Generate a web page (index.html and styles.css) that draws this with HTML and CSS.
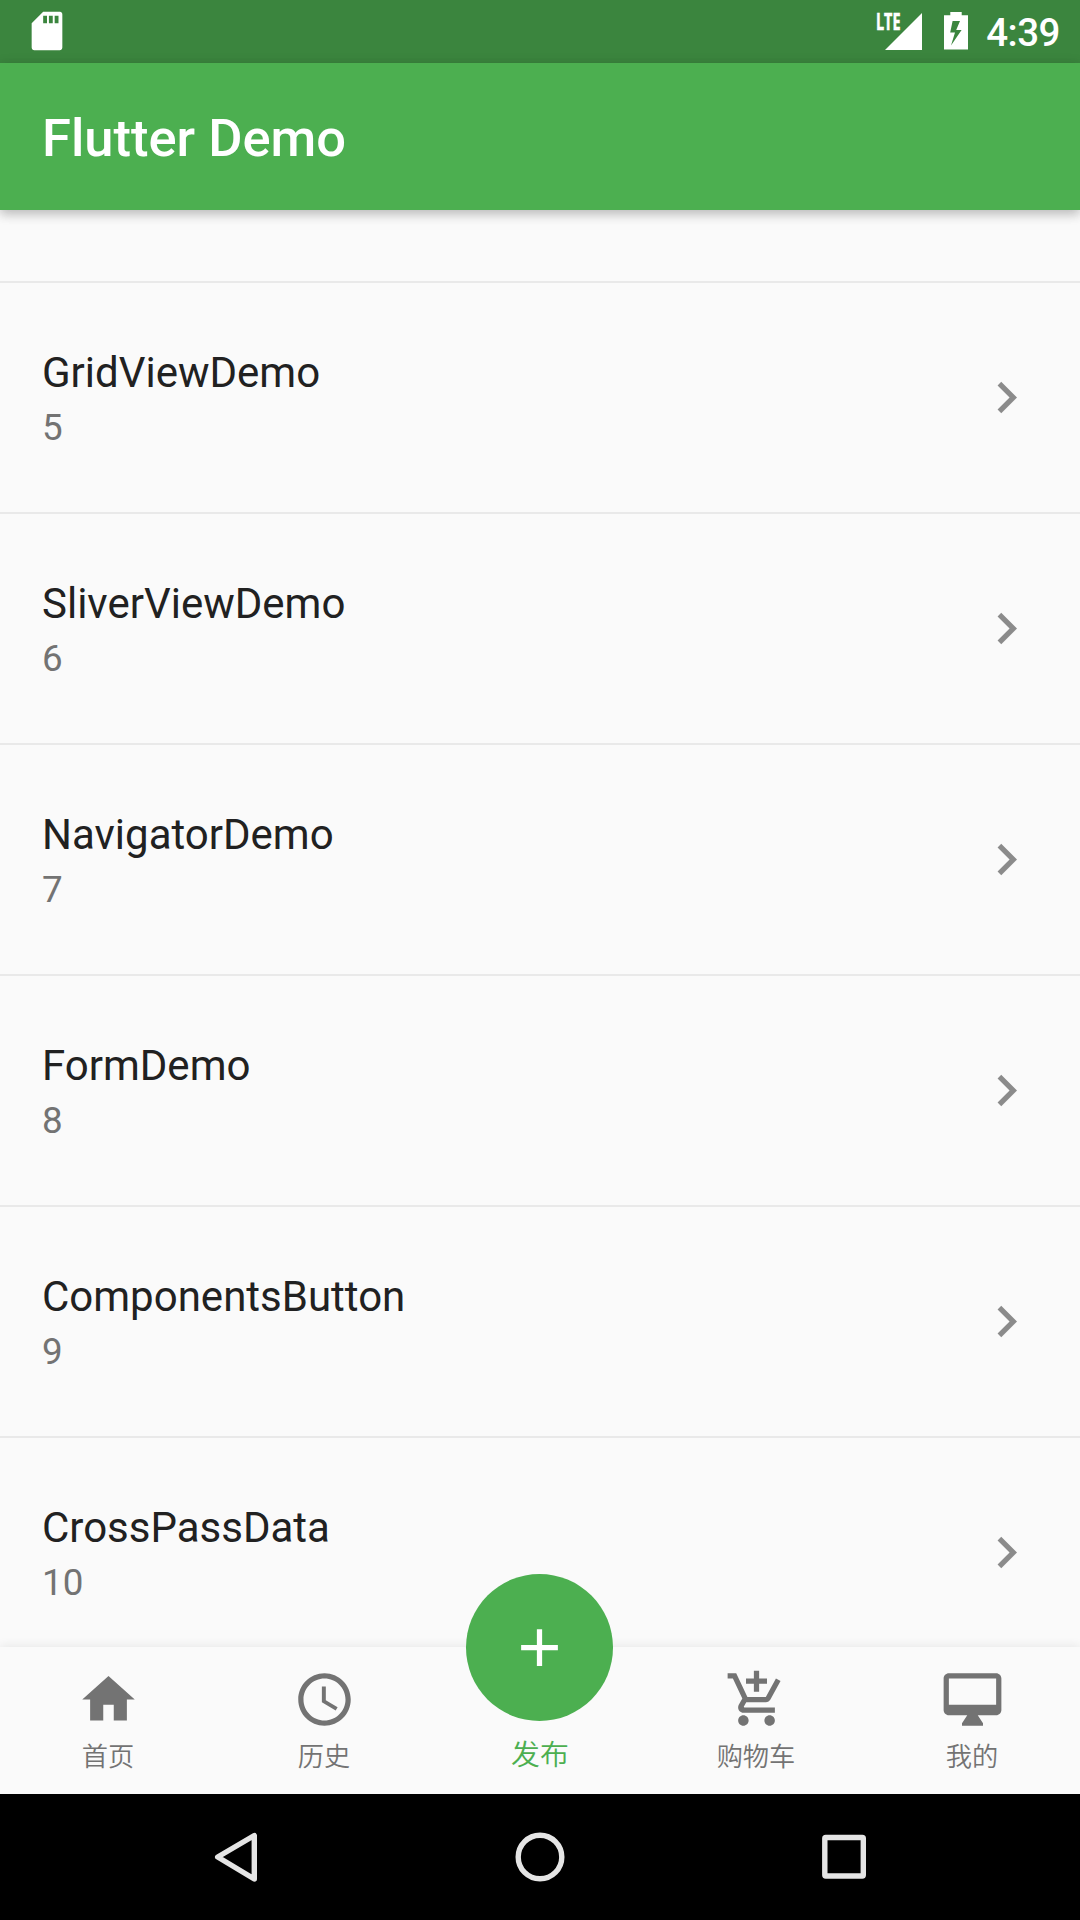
FILE: index.html
```html
<!DOCTYPE html>
<html lang="zh-CN">
<head>
<meta charset="utf-8">
<title>Flutter Demo</title>
<link rel="stylesheet" href="styles.css">
</head>
<body>
<svg class="defs" width="0" height="0" aria-hidden="true">
  <symbol id="chevron" viewBox="0 0 24 24"><path d="M10 6L8.59 7.41 13.17 12l-4.58 4.59L10 18l6-6z"/></symbol>
</svg>
<div class="screen">
  <header class="status">
    <svg class="sd" viewBox="0 0 24 24"><path d="M18.8 2H10L4 8v12.6c0 .8.6 1.4 1.4 1.4h13.2c.8 0 1.4-.6 1.4-1.4V3.4c0-.8-.6-1.4-1.2-1.4zM12 8h-2V4h2v4zm3 0h-2V4h2v4zm3 0h-2V4h2v4z"/></svg>
    <div class="status-right">
      <svg class="signal" viewBox="0 0 46 38"><path d="M46 0v37H9z"/><text x="0" y="16.5" textLength="24.5" lengthAdjust="spacingAndGlyphs">LTE</text></svg>
      <svg class="battery" viewBox="0 0 24 38"><path fill-rule="evenodd" d="M6.3 0h11.4v3.2H24V37.5H0V3.2h6.3zM8.6 9L6.2 20.5h4.8l-4 13L17.6 18h-5.4L16 9z"/></svg>
      <span class="time">4:39</span>
    </div>
  </header>
  <div class="appbar"><h1>Flutter Demo</h1></div>
  <main class="list">
    <div class="spacer"></div>
    <div class="row"><div class="text"><div class="title">GridViewDemo</div><div class="sub">5</div></div><svg class="icon"><use href="#chevron"/></svg></div>
    <div class="row"><div class="text"><div class="title">SliverViewDemo</div><div class="sub">6</div></div><svg class="icon"><use href="#chevron"/></svg></div>
    <div class="row"><div class="text"><div class="title">NavigatorDemo</div><div class="sub">7</div></div><svg class="icon"><use href="#chevron"/></svg></div>
    <div class="row"><div class="text"><div class="title">FormDemo</div><div class="sub">8</div></div><svg class="icon"><use href="#chevron"/></svg></div>
    <div class="row"><div class="text"><div class="title">ComponentsButton</div><div class="sub">9</div></div><svg class="icon"><use href="#chevron"/></svg></div>
    <div class="row"><div class="text"><div class="title">CrossPassData</div><div class="sub">10</div></div><svg class="icon"><use href="#chevron"/></svg></div>
  </main>
  <nav class="tabs">
    <div class="tab"><svg class="icon" viewBox="0 0 24 24"><path d="M10 20v-6h4v6h5v-8h3L12 3 2 12h3v8z"/></svg><span>首页</span></div>
    <div class="tab"><svg class="icon" viewBox="0 0 24 24"><path d="M11.99 2C6.47 2 2 6.48 2 12s4.47 10 9.99 10C17.52 22 22 17.52 22 12S17.52 2 11.99 2zM12 20c-4.42 0-8-3.58-8-8s3.58-8 8-8 8 3.58 8 8-3.58 8-8 8zm.5-13H11v6l5.25 3.15.75-1.23-4.5-2.67z"/></svg><span>历史</span></div>
    <div class="tab active"><span>发布</span></div>
    <div class="tab"><svg class="icon" viewBox="0 0 24 24"><path d="M11 9h2V6h3V4h-3V1h-2v3H8v2h3v3zm-4 9c-1.1 0-1.99.9-1.99 2S5.9 22 7 22s2-.9 2-2-.9-2-2-2zm10 0c-1.1 0-1.99.9-1.99 2s.89 2 1.99 2 2-.9 2-2-.9-2-2-2zm-9.83-3.25l.03-.12.9-1.63h7.45c.75 0 1.41-.41 1.75-1.03l3.86-7.01L19.42 4h-.01l-1.1 2-2.76 5H8.53l-.13-.27L6.16 6l-.95-2-.94-2H1v2h2l3.6 7.59-1.35 2.45c-.16.28-.25.61-.25.96 0 1.1.9 2 2 2h12v-2H7.42c-.13 0-.25-.11-.25-.25z"/></svg><span>购物车</span></div>
    <div class="tab"><svg class="icon" viewBox="0 0 24 24"><path d="M21 2H3c-1.1 0-2 .9-2 2v12c0 1.1.9 2 2 2h7l-2 3v1h8v-1l-2-3h7c1.1 0 2-.9 2-2V4c0-1.1-.9-2-2-2zm0 12H3V4h18v10z"/></svg><span>我的</span></div>
    <div class="fab"><svg class="icon" viewBox="0 0 24 24"><path d="M19 13h-6v6h-2v-6H5v-2h6V5h2v6h6z"/></svg></div>
  </nav>
  <footer class="sysnav">
    <svg viewBox="0 0 48 52"><path d="M42.3 4.5v43.5L5.700 26z"/></svg>
    <svg viewBox="0 0 52 52"><circle cx="26" cy="26" r="21.8"/></svg>
    <svg viewBox="0 0 48 52"><rect x="4.8" y="6.5" width="38.5" height="38.5" rx="1"/></svg>
  </footer>
</div>
</body>
</html>
```
FILE: styles.css
```css
* { box-sizing: border-box; margin: 0; padding: 0; }
body { background: #fafafa; font-family: Roboto, "Noto Sans CJK SC", sans-serif; }
.defs { position: absolute; }
.screen { width: 1080px; height: 1920px; display: flex; flex-direction: column; overflow: hidden; }
.status { height: 63px; flex: none; background: #3b853e; display: flex; justify-content: space-between; align-items: flex-start; padding: 0 20px 0 24px; color: #fff; fill: #fff; }
.sd { width: 46px; height: 46px; margin-top: 8px; }
.status-right { display: flex; }
.signal { width: 46px; height: 38px; margin: 12.5px 21.5px 0 0; overflow: visible; }
.signal text { font: 700 22.5px/1 "Open Sans", sans-serif; stroke: #fff; stroke-width: .6px; }
.battery { width: 24px; height: 38px; margin: 12px 18.5px 0 0; }
.time { font-size: 38.5px; font-weight: 500; letter-spacing: -.5px; line-height: 44px; margin-top: 11px; }
.appbar { height: 147px; flex: none; background: #4caf50; display: flex; align-items: center; padding: 2px 42px 0; box-shadow: 0 5px 10px rgba(0,0,0,.16), 0 2px 12px rgba(0,0,0,.13); z-index: 1; position: relative; }
h1 { color: #fff; font-size: 52.5px; font-weight: 500; line-height: 62px; }
.list { flex: 1; min-height: 0; overflow: hidden; }
.spacer { height: 73px; border-bottom: 2px solid #e9e9e9; }
.row { height: 231px; border-bottom: 2px solid #e9e9e9; display: flex; justify-content: space-between; align-items: center; padding: 0 42px; }
.icon { width: 63px; height: 63px; fill: #737373; display: block; }
.row .icon { fill: #8b8b8b; }
.text { padding-top: 4px; }
.title { font-size: 42px; line-height: 56px; color: #212121; }
.sub { font-size: 36.75px; line-height: 54px; color: #737373; }
.tabs { height: 147px; flex: none; background: #fafafa; position: relative; display: flex; box-shadow: 0 -2px 9px rgba(0,0,0,.07); }
.tab { flex: 1; display: flex; flex-direction: column; align-items: center; justify-content: flex-end; color: #737373; font-size: 26.25px; line-height: 38px; padding: 0 0 18px; gap: 7px; font-weight: 350; }
.active { color: #4caf50; font-size: 28.9px; padding-bottom: 20px; }
.fab { position: absolute; left: 466.4px; top: -73.5px; width: 147px; height: 147px; border-radius: 50%; background: #4caf50; display: flex; align-items: center; justify-content: center; }
.fab .icon { fill: #fff; }
.sysnav { height: 126px; flex: none; background: #000; display: flex; justify-content: space-between; align-items: center; padding: 0 212px; }
.sysnav svg { height: 52px; width: auto; fill: none; stroke: #e5e5e5; stroke-width: 5.4; stroke-linejoin: round; }
```
